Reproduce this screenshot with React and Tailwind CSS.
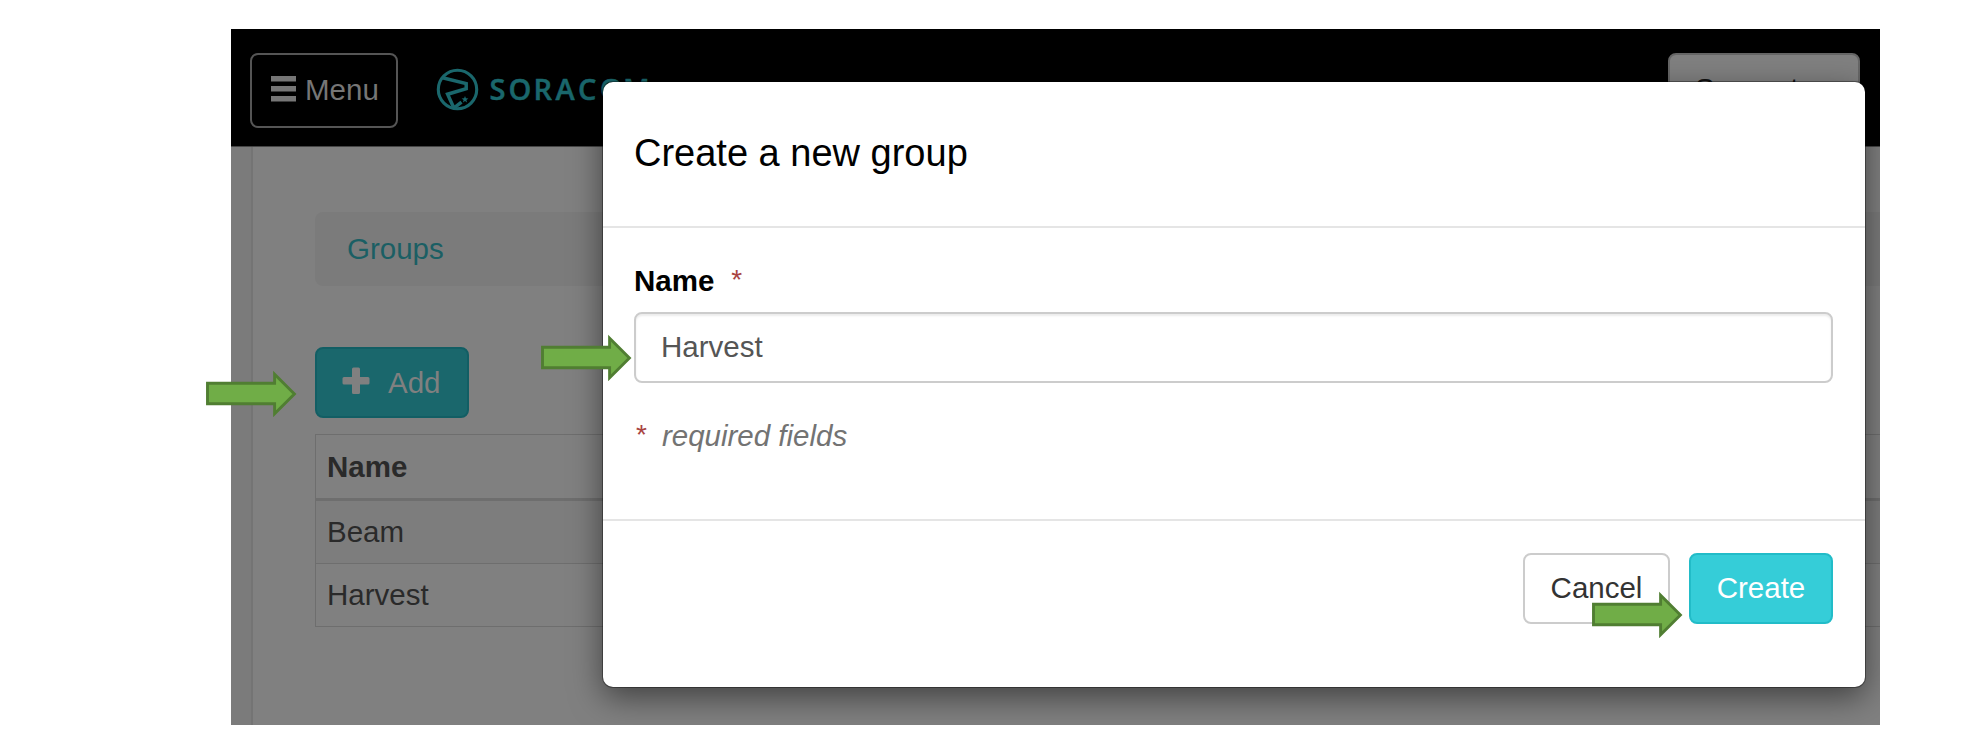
import React from "react";

function Arrow({ className }) {
  return (
    <svg className={className} width="92" height="48" viewBox="0 0 92 48">
      <path
        d="M1.5 13.2H68.6V4.2L88.4 24L68.6 43.8V33.8H1.5Z"
        fill="#70ad47"
        stroke="#507e32"
        strokeWidth="2.9"
        strokeMiterlimit="10"
      />
    </svg>
  );
}

function Logo() {
  return (
    <svg width="220" height="44" viewBox="0 0 220 44" className="ml-[38px] -mt-[4px]">
      <g fill="none" stroke="#1a676c" strokeWidth="3.1">
        <circle cx="21.5" cy="22.500" r="19.2" />
        <path d="M6.5 10.7L30.2 16.500V21.600L11.600 27.200L18 41.300M17.500 41.300L25.500 35.200" strokeWidth="3.5" />
      </g>
      <path d="M29 29l.9 2.300 2.500.100-2 1.600.700 2.500-2.100-1.400-2.100 1.400.700-2.500-2-1.600 2.500-.100z" fill="#1a676c" />
      <text
        x="53.500 72.500 97.500 119.500 142 164 187"
        y="32.800"
        fontSize="29"
        fontWeight="600"
        fill="#1a676c"
        stroke="#1a676c"
        strokeWidth="0.500"
        fontFamily="Open Sans, Noto Sans, sans-serif"
      >
        SORACOM
      </text>
    </svg>
  );
}

function Header() {
  return (
    <header className="flex h-[118px] shrink-0 items-start border-b border-[#454545] bg-black pl-[19px] pr-5 pt-6">
      <button className="flex h-[75px] w-[148px] items-center rounded-[8px] border-2 border-[#555] pb-px pl-[19px] text-[29.500px] text-[#767676]">
        <svg width="25" height="26" viewBox="0 0 25 26" fill="#767676" className="mr-[9px] -mt-[2px]">
          <rect y="0" width="25" height="5.500" />
          <rect y="10" width="25" height="5.500" />
          <rect y="20" width="25" height="5.500" />
        </svg>
        Menu
      </button>
      <div className="flex h-[75px] items-center">
        <Logo />
      </div>
      <button className="ml-auto flex h-[75px] w-[192px] items-center rounded-[8px] border-2 border-[#666] bg-[#808080] pb-[2px] pl-[25px] text-[29.500px] text-[#111]">
        Support
      </button>
    </header>
  );
}

function Page() {
  return (
    <main className="flex min-h-0 flex-1 bg-[#7b7b7b] pl-5">
      <div className="flex-1 border-l-2 border-[#747474] bg-[#808080] pl-[62px] pt-[65px] text-[29.500px] leading-[42px] text-[#2a2a2a]">
        <div className="flex h-[74px] items-center rounded-l-[8px] bg-[#7b7b7b] pl-8 text-[#1b5f64]">
          Groups
        </div>
        <button className="mt-[61px] flex h-[71px] w-[154px] items-center rounded-[8px] border-2 border-[#125e64] bg-[#1a676c] pl-[25px] text-[#808080]">
          <svg width="28" height="28" viewBox="0 0 28 28" className="mr-[18px] -mt-[3px]">
            <path d="M10 2a1.500 1.500 0 0 1 1.500-1.500h5A1.500 1.500 0 0 1 18 2v8h8a1.500 1.500 0 0 1 1.500 1.500v4.500a1.500 1.500 0 0 1-1.500 1.500h-8v8a1.500 1.500 0 0 1-1.500 1.500h-5a1.500 1.500 0 0 1-1.500-1.500v-8H2A1.500 1.500 0 0 1 .500 16v-4.500A1.500 1.500 0 0 1 2 10h8z" fill="#808080" />
          </svg>
          Add
        </button>
        <div className="mt-4 border-y border-l border-[#6e6e6e]">
          <div className="flex h-[66px] items-center border-b-[3px] border-[#6e6e6e] pl-[11px] font-bold">Name</div>
          <div className="flex h-[63px] items-center border-b border-[#6e6e6e] bg-[#7d7d7d] pl-[11px]">Beam</div>
          <div className="flex h-[62px] items-center pl-[11px]">Harvest</div>
        </div>
      </div>
    </main>
  );
}

function Modal() {
  return (
    <section className="absolute left-[372px] top-[53px] flex h-[605px] w-[1262px] flex-col rounded-[10px] bg-white shadow-[0_10px_32px_rgba(0,0,0,0.5),0_0_0_1px_rgba(0,0,0,0.35)]">
      <h2 className="flex h-[146px] items-center border-b-2 border-[#e5e5e5] pb-[2px] pl-[31px] text-[38px] leading-[54px] text-black">
        Create a new group
      </h2>
      <div className="h-[293px] border-b-2 border-[#e5e5e5] pl-[31px] pr-8 pt-8 text-[29.500px] leading-[42px]">
        <label className="flex font-bold text-black">
          Name<span className="-mt-px ml-[17px] text-[28px] font-normal text-[#a94442]">*</span>
        </label>
        <div className="mt-[10px] flex h-[71px] items-center rounded-[8px] border-2 border-[#ccc] pb-px pl-[25px] text-[#555] shadow-[inset_0_2px_2px_rgba(0,0,0,0.075)]">
          Harvest
        </div>
        <p className="mt-8 flex pl-[2px] text-[#737373]">
          <span className="-mt-px text-[28px] text-[#a94442]">*</span>
          <em className="ml-[15px]">required fields</em>
        </p>
      </div>
      <footer className="flex justify-end gap-[19px] px-8 pt-8 text-[29.500px]">
        <button className="h-[71px] w-[147px] rounded-[8px] border-2 border-[#ccc] bg-white pb-px text-[#333]">Cancel</button>
        <button className="h-[71px] w-[144px] rounded-[8px] border-2 border-[#22bcc8] bg-[#35cdd8] pb-px text-white">Create</button>
      </footer>
    </section>
  );
}

export default function App() {
  return (
    <div className="relative h-[739px] w-[1978px] overflow-hidden bg-white pl-[231px] pt-[29px] font-['Liberation_Sans',Arial,sans-serif]">
      <div className="relative flex h-[696px] w-[1649px] flex-col overflow-hidden">
        <Header />
        <Page />
        <Modal />
      </div>
      <Arrow className="absolute left-[206px] top-[370px]" />
      <Arrow className="absolute left-[541px] top-[334px]" />
      <Arrow className="absolute left-[1592px] top-[591px]" />
    </div>
  );
}
